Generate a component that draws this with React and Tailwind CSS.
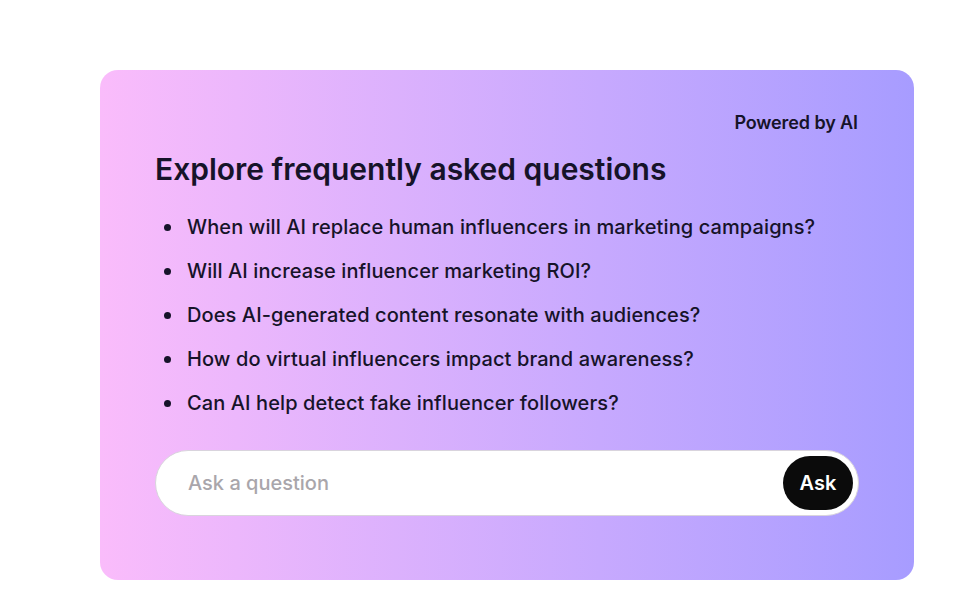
import { useState } from "react";

const questions = [
  "When will AI replace human influencers in marketing campaigns?",
  "Will AI increase influencer marketing ROI?",
  "Does AI-generated content resonate with audiences?",
  "How do virtual influencers impact brand awareness?",
  "Can AI help detect fake influencer followers?",
];

export default function App() {
  const [query, setQuery] = useState("");

  return (
    <div className="min-h-screen bg-white pt-[70px] pl-[100px] font-['Inter','Noto_Sans',sans-serif] text-[#161329]">
      <div className="w-[814px] h-[510px] rounded-[18px] bg-gradient-to-r from-[#fabcfb] to-[#a79cff] px-[55px] pt-[40px]">
        <div className="flex justify-end pr-[1px]">
          <p className="text-[18px] font-semibold leading-[26px] tracking-[-0.1px]">Powered by AI</p>
        </div>

        <h2 className="mt-[14px] text-[30px] font-semibold leading-[38px]">
          Explore frequently asked questions
        </h2>

        <ul className="mt-[26px] flex flex-col gap-[18px] pl-[9px]">
          {questions.map((q) => (
            <li key={q} className="flex items-center gap-[16px] text-[20px] font-medium leading-[26px] tracking-[0.1px]">
              <span className="w-[7px] h-[7px] rounded-full bg-[#161329] shrink-0" />
              {q}
            </li>
          ))}
        </ul>

        <div className="mt-[34px] flex items-center h-[66px] rounded-full bg-white border border-[#d9d4dd] pl-[32px] pr-[5px]">
          <input
            value={query}
            onChange={(e) => setQuery(e.target.value)}
            placeholder="Ask a question"
            className="flex-1 bg-transparent outline-none text-[20px] placeholder:text-[#a9a6ab] font-medium"
          />
          <button className="w-[70px] h-[54px] rounded-full bg-[#0b0b0b] text-white text-[20px] font-semibold">
            Ask
          </button>
        </div>
      </div>
    </div>
  );
}
